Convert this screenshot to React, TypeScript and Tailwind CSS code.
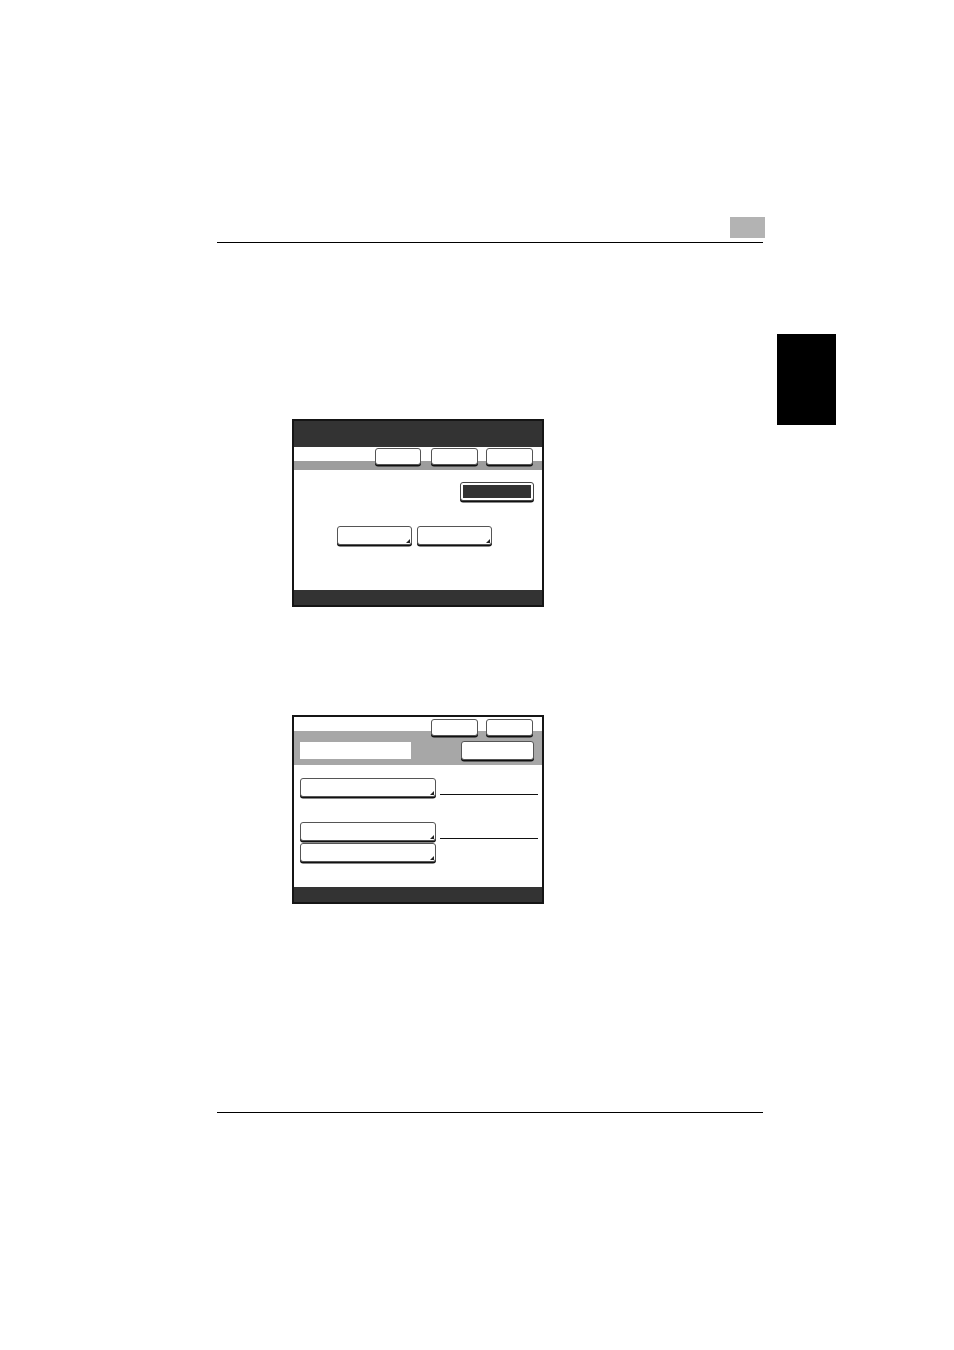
import React from "react";

function Corner() {
  return (
    <svg className="absolute right-[1px] bottom-[1px]" width="4" height="4" viewBox="0 0 4 4">
      <polygon points="4,0 4,4 0,4" fill="#222" />
    </svg>
  );
}

function Btn({ w, h, corner = false, cls = "" }: { w: string; h: string; corner?: boolean; cls?: string }) {
  return (
    <div
      className={`relative ${w} ${h} ${cls} bg-white border border-[#555] rounded-[3px] shadow-[0_1.5px_0_#111] box-border`}
    >
      {corner && <Corner />}
    </div>
  );
}

function Screen1() {
  return (
    <div className="ml-[75px] mt-[176px] w-[252px] h-[188px] border-2 border-[#151515] box-border flex flex-col">
      <div className="h-[26px] bg-[#333333]" />
      <div className="h-[23px] bg-[linear-gradient(to_bottom,#ffffff_14px,#9d9d9d_14px)] flex justify-end items-start pt-[1px] pr-[9px]">
        <Btn w="w-[46px]" h="h-[17px]" />
        <Btn w="w-[47px]" h="h-[17px]" cls="ml-[10px]" />
        <Btn w="w-[47px]" h="h-[17px]" cls="ml-[8px]" />
      </div>
      <div className="h-[120px] bg-white flex flex-col">
        <div className="mt-[12px] ml-[166px] w-[74px] h-[19px] bg-white border border-[#444] rounded-[3px] p-[2px] box-border shadow-[0_1.5px_0_#111]">
          <div className="w-full h-full bg-[#333333]" />
        </div>
        <div className="mt-[25px] ml-[43px] flex gap-[5px]">
          <Btn w="w-[75px]" h="h-[19px]" corner />
          <Btn w="w-[75px]" h="h-[19px]" corner />
        </div>
      </div>
      <div className="flex-1 bg-[#333333]" />
    </div>
  );
}

function Screen2() {
  return (
    <div className="ml-[75px] mt-[108px] w-[252px] h-[189px] border-2 border-[#151515] box-border flex flex-col">
      <div className="h-[48px] bg-[linear-gradient(to_bottom,#ffffff_14px,#a7a7a7_14px)] flex flex-col">
        <div className="flex justify-end pt-[2px] pr-[9px]">
          <Btn w="w-[47px]" h="h-[17px]" />
          <Btn w="w-[47px]" h="h-[17px]" cls="ml-[8px]" />
        </div>
        <div className="flex items-start justify-between mt-[5px] pl-[6px] pr-[8px]">
          <div className="mt-[1px] w-[111px] h-[17px] bg-white" />
          <Btn w="w-[73px]" h="h-[19px]" />
        </div>
      </div>
      <div className="h-[122px] bg-white flex flex-col pl-[6px]">
        <div className="mt-[13px] flex items-end">
          <Btn w="w-[136px]" h="h-[19px]" corner />
          <div className="ml-[4px] mb-[2px] w-[98px] h-[1.5px] bg-[#111]" />
        </div>
        <div className="mt-[25px] flex items-end">
          <Btn w="w-[136px]" h="h-[19px]" corner />
          <div className="ml-[4px] mb-[2px] w-[98px] h-[1.5px] bg-[#111]" />
        </div>
        <div className="mt-[2px] flex">
          <Btn w="w-[136px]" h="h-[19px]" corner />
        </div>
      </div>
      <div className="flex-1 bg-[#333333]" />
    </div>
  );
}

export default function App() {
  return (
    <div className="w-[954px] h-[1350px] bg-white overflow-hidden">
      <div className="pt-[217px] pl-[217px] w-[765px]">
        <div className="flex justify-end">
          <div className="w-[35px] h-[21px] bg-[#b3b3b3]" />
        </div>
        <div className="mt-[3.5px] w-[546px] h-[1.5px] bg-black" />
      </div>
      <div className="flex pl-[217px]">
        <div className="w-[560px] flex flex-col">
          <Screen1 />
          <Screen2 />
          <div className="mt-[207.5px] w-[546px] h-[1.5px] bg-black" />
        </div>
        <div className="mt-[91px] w-[59px] h-[91px] bg-black" />
      </div>
    </div>
  );
}
